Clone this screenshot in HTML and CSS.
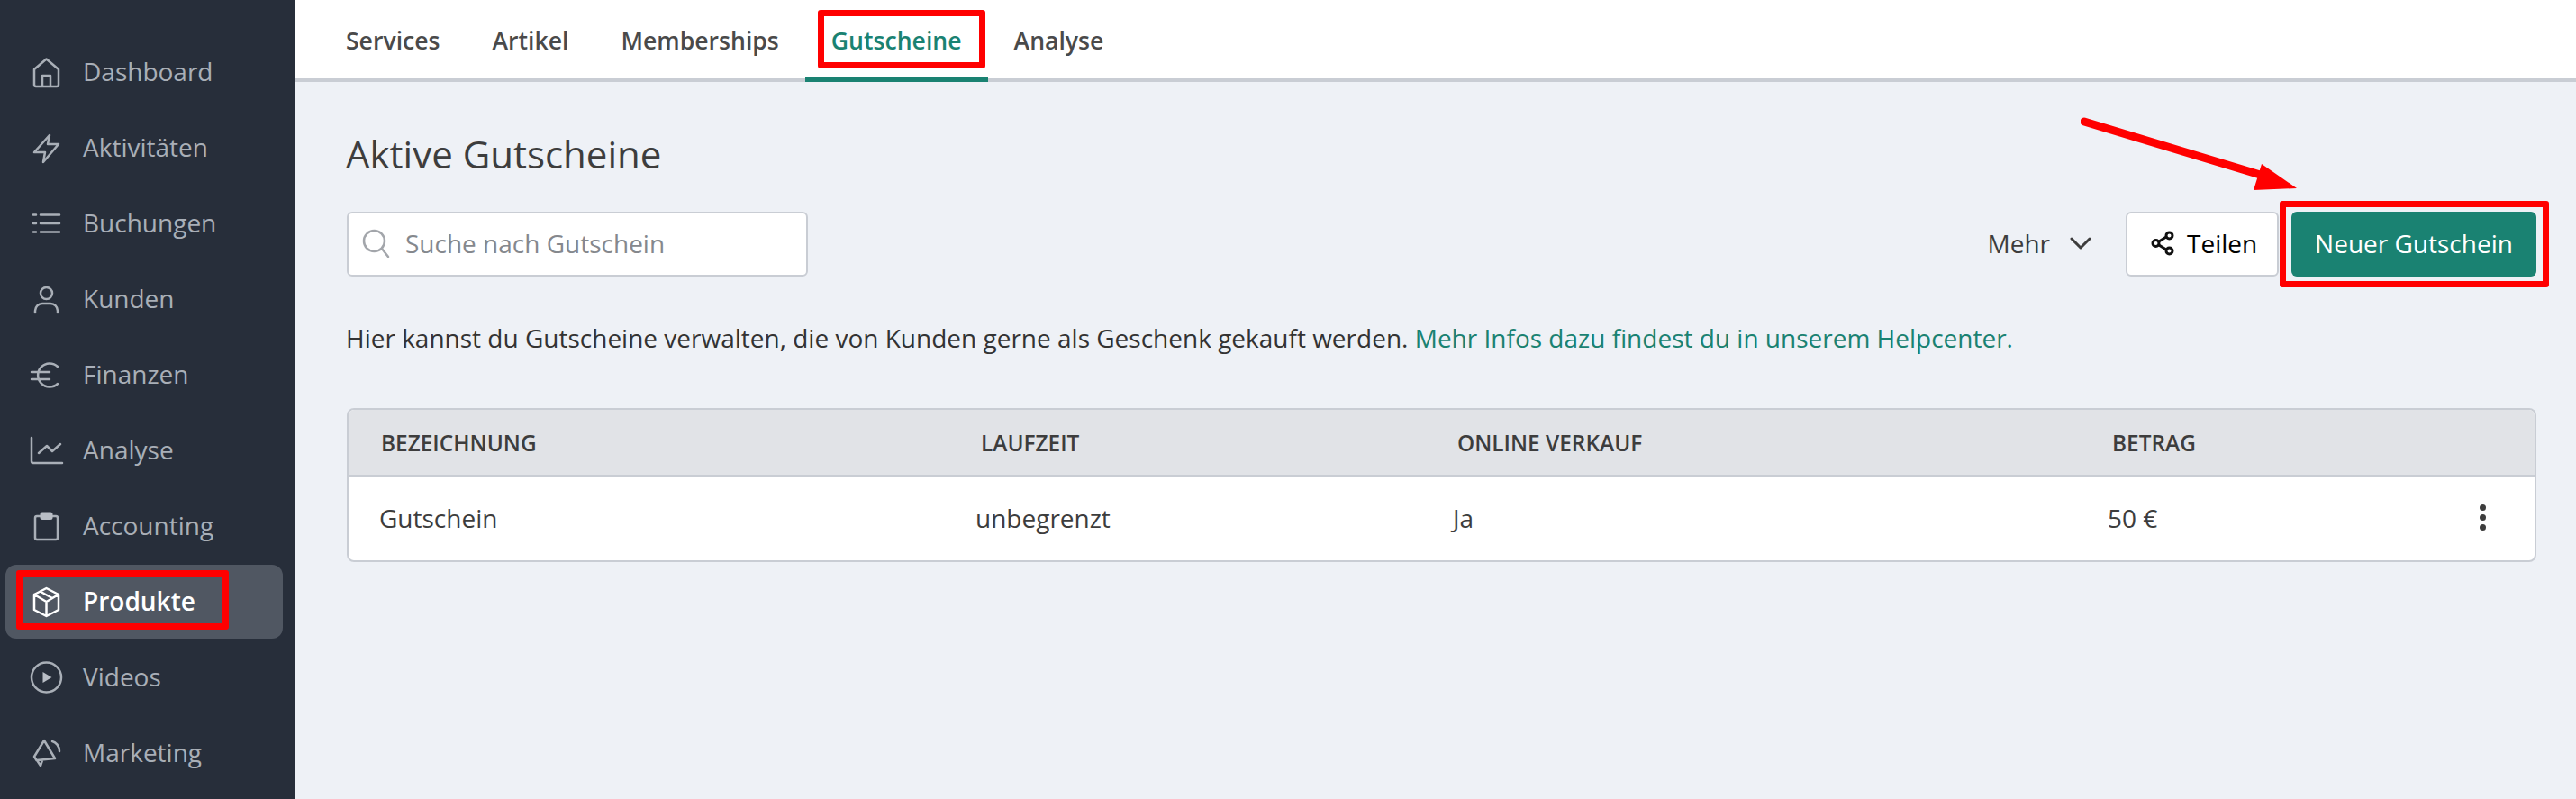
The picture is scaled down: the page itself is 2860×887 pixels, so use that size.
FILE: index.html
```html
<!DOCTYPE html>
<html lang="de">
<head>
<meta charset="utf-8">
<title>Gutscheine</title>
<link rel="stylesheet" href="styles.css">
</head>
<body>
<div class="app">
  <aside class="sidebar">
    <nav class="nav">
      <a class="nav-item"><svg class="nav-icon" viewBox="0 0 40 40"><path d="M8 36h23a2 2 0 0 0 2-2V17L19.500 5.500 6 17v17a2 2 0 0 0 2 2zM15 36V24h9v12"/></svg><span>Dashboard</span></a>
      <a class="nav-item"><svg class="nav-icon" viewBox="0 0 40 40"><path d="M23 6 6 25h12l-2 11 17-20H21z"/></svg><span>Aktivitäten</span></a>
      <a class="nav-item"><svg class="nav-icon" viewBox="0 0 40 40"><path d="M13 10.500h21M13 20h21M13 29.500h21M5 10.500h3M5 20h3M5 29.500h3"/></svg><span>Buchungen</span></a>
      <a class="nav-item"><svg class="nav-icon" viewBox="0 0 40 40"><circle cx="19.500" cy="13.500" r="6.500"/><path d="M7 35v-2a8 8 0 0 1 8-8h9a8 8 0 0 1 8 8v2"/></svg><span>Kunden</span></a>
      <a class="nav-item"><svg class="nav-icon" viewBox="0 0 40 40"><path d="M32 11a13 13 0 1 0 0 19M3 17h20M3 25h20"/></svg><span>Finanzen</span></a>
      <a class="nav-item"><svg class="nav-icon" viewBox="0 0 40 40"><path d="M3 6v26a2 2 0 0 0 2 2h32M11 23l9-8 6 6 9-8"/></svg><span>Analyse</span></a>
      <a class="nav-item"><svg class="nav-icon" viewBox="0 0 40 40"><rect x="7" y="9" width="25" height="26" rx="2"/><rect class="solid" x="12.500" y="4.500" width="14" height="8.500" rx="2.500"/></svg><span>Accounting</span></a>
      <a class="nav-item active"><svg class="nav-icon" viewBox="0 0 40 40"><path d="M19.500 5 33 12v17l-13.500 7L6 29V12zM6 12l13.500 8L33 12M19.500 20v16M12.500 8.500 26 16"/></svg><span>Produkte</span></a>
      <a class="nav-item"><svg class="nav-icon" viewBox="0 0 40 40"><circle cx="19.500" cy="20" r="16.500"/><path class="solid" d="M15.500 14v12l10-6z"/></svg><span>Videos</span></a>
      <a class="nav-item"><svg class="nav-icon" viewBox="0 0 40 40"><path d="M17 6 6 24l2.500 4L29 26zM9 28l4 6 2-6M26 7c4 1 8 5 8 11"/></svg><span>Marketing</span></a>
    </nav>
  </aside>
  <main class="main">
    <div class="tabs">
      <a class="tab">Services</a>
      <a class="tab">Artikel</a>
      <a class="tab">Memberships</a>
      <a class="tab current">Gutscheine</a>
      <a class="tab">Analyse</a>
    </div>
    <section class="content">
      <h1 class="title">Aktive Gutscheine</h1>
      <div class="toolbar">
        <label class="search">
          <svg class="search-icon" viewBox="0 0 32 32"><circle cx="14.500" cy="13.500" r="11.500"/><path d="m23 22 7 9"/></svg>
          <span>Suche nach Gutschein</span>
        </label>
        <div class="actions">
          <button class="more">Mehr<svg class="chevron" viewBox="0 0 24 14"><path d="m2 2 10 10L22 2"/></svg></button>
          <button class="share"><svg class="share-icon" viewBox="0 0 26 28"><circle cx="5.500" cy="14" r="3.500"/><circle cx="20.500" cy="5.500" r="3.500"/><circle cx="20.500" cy="22.500" r="3.500"/><path d="m9 12 8-5M9 16l8 5"/></svg>Teilen</button>
          <button class="primary">Neuer Gutschein</button>
        </div>
      </div>
      <p class="intro">Hier kannst du Gutscheine verwalten, die von Kunden gerne als Geschenk gekauft werden. <a class="link">Mehr Infos dazu findest du in unserem Helpcenter.</a></p>
      <div class="table">
        <div class="row head">
          <div>Bezeichnung</div><div>Laufzeit</div><div>Online Verkauf</div><div>Betrag</div><div></div>
        </div>
        <div class="row body">
          <div>Gutschein</div><div>unbegrenzt</div><div>Ja</div><div>50 €</div>
          <div class="dots"><i></i><i></i><i></i></div>
        </div>
      </div>
    </section>
  </main>
  <div class="mark mark-nav"></div>
  <div class="mark mark-tab"></div>
  <div class="mark mark-btn"></div>
  <svg class="arrow" viewBox="0 0 260 90"><path class="shaft" d="M4 5 206 66"/><path class="head-tip" d="M201 52 240 79 192 81z"/></svg>
</div>
</body>
</html>
```
FILE: styles.css
```css
* { box-sizing: border-box; }
html, body { margin: 0; height: 100%; overflow: hidden; }
body { font-family: "Open Sans", "Liberation Sans", sans-serif; font-size: 28px; color: #3d3d3d; background: #eef1f6; }
.app { position: relative; display: flex; height: 887px; }

.sidebar { flex: 0 0 328px; background: #272e3a; padding-top: 38px; overflow: hidden; }
.nav { display: flex; flex-direction: column; }
.nav-item { display: flex; align-items: center; gap: 20px; height: 82px; margin: 1px 14px 1px 6px; padding: 0 0 2px 26px; border-radius: 12px; color: #a9afb7; }
.nav-icon { width: 40px; height: 40px; margin-top: 2px; flex: none; fill: none; stroke: currentColor; stroke-width: 2.5; stroke-linejoin: round; stroke-linecap: round; }
.nav-icon .solid { fill: #b9bec6; stroke: none; }
.nav-item.active { background: #505762; color: #fff; font-weight: 600; }

.main { flex: 1; min-width: 0; display: flex; flex-direction: column; }
.tabs { display: flex; height: 91px; padding-left: 27px; background: #fff; border-bottom: 4px solid #c9cdd4; }
.tab { display: flex; align-items: center; height: 91px; padding: 4px 29px 0; font-weight: 600; font-size: 26.6px; color: #4a4a4a; border-bottom: 6px solid transparent; border-radius: 6px 6px 0 0; }
.tab.current { color: #1a8272; border-bottom-color: #1a8272; }

.content { padding: 52px 44px 0 57px; }
.title { margin: 0 0 0 -1px; font-size: 42px; line-height: 56px; font-weight: 400; color: #3d3d3d; }
.toolbar { display: flex; justify-content: space-between; margin-top: 36px; }
.search { display: flex; align-items: center; gap: 17px; width: 512px; height: 72px; padding: 0 0 2px 14px; background: #fff; border: 2px solid #c9cdd4; border-radius: 6px; color: #85888d; }
.search-icon { width: 32px; height: 32px; fill: none; stroke: #a3a6ab; stroke-width: 2.5; stroke-linecap: round; }
.actions { display: flex; align-items: center; }
.actions button { font: inherit; height: 72px; border-radius: 6px; }
.more { display: flex; align-items: center; gap: 22px; margin-right: 38px; padding: 0 0 2px; background: none; border: 0; color: #3d3d3d; }
.chevron { width: 24px; height: 14px; fill: none; stroke: #3d3d3d; stroke-width: 3; stroke-linecap: round; stroke-linejoin: round; }
.share { display: flex; align-items: center; gap: 14px; width: 170px; padding: 0 0 2px 26px; margin-right: 14px; background: #fff; border: 2px solid #c9cdd4; color: #000; }
.share-icon { width: 26px; height: 28px; fill: none; stroke: #111; stroke-width: 3; }
.primary { width: 272px; padding: 0 0 2px; background: #1a8272; border: 0; color: #fff; }

.intro { margin: 43px 0 0 -1px; line-height: 50px; color: #333; }
.link { color: #1a8272; }

.table { margin-top: 53px; background: #fff; border: 2px solid #c9cdd4; border-radius: 8px; overflow: hidden; }
.row { display: grid; align-items: center; }
.head { grid-template-columns: 666px 529px 727px 1fr 60px; height: 75px; padding-left: 36px; background: #e1e3e7; border-bottom: 3px solid #c9cdd4; font-size: 24.4px; font-weight: 600; text-transform: uppercase; }
.body { grid-template-columns: 662px 530px 727px 1fr 115px; height: 92px; padding: 0 0 3px 34px; }
.dots { display: flex; flex-direction: column; align-items: center; gap: 4px; padding-right: 1px; }
.dots i { width: 7px; height: 7px; border-radius: 50%; background: #3d3d3d; }

.mark { position: absolute; border: 7px solid #f00; border-radius: 3px; }
.mark-nav { left: 18px; top: 633px; width: 236px; height: 66px; }
.mark-tab { left: 908px; top: 11px; width: 186px; height: 65px; }
.mark-btn { left: 2531px; top: 223px; width: 299px; height: 96px; }
.arrow { position: absolute; left: 2310px; top: 130px; width: 260px; height: 90px; }
.shaft { fill: none; stroke: #f00; stroke-width: 9; stroke-linecap: round; }
.head-tip { fill: #f00; }
```
